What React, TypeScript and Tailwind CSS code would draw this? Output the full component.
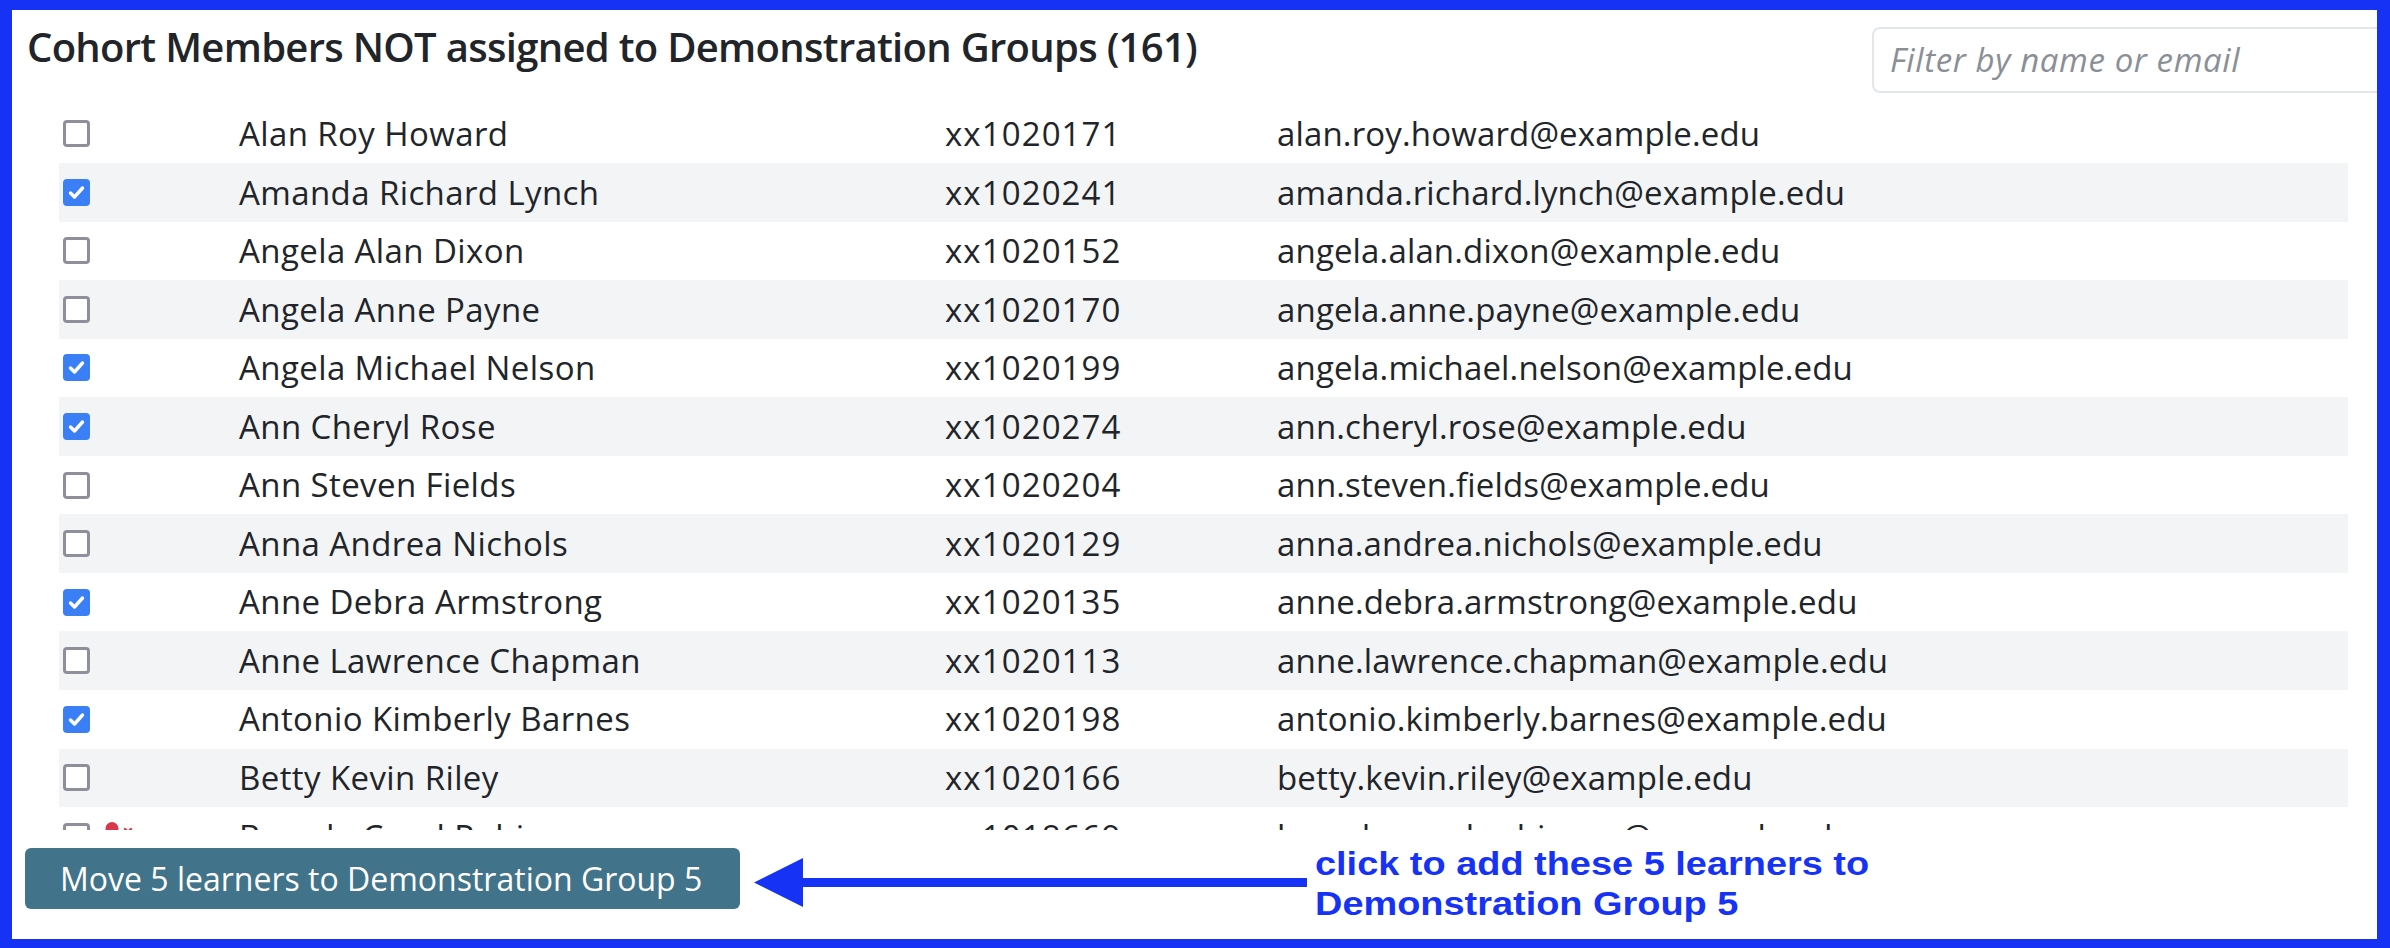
import React from "react";

type Row = { name: string; id: string; email: string; checked: boolean; flag?: boolean };

const rows: Row[] = [
  { name: "Alan Roy Howard", id: "xx1020171", email: "alan.roy.howard@example.edu", checked: false },
  { name: "Amanda Richard Lynch", id: "xx1020241", email: "amanda.richard.lynch@example.edu", checked: true },
  { name: "Angela Alan Dixon", id: "xx1020152", email: "angela.alan.dixon@example.edu", checked: false },
  { name: "Angela Anne Payne", id: "xx1020170", email: "angela.anne.payne@example.edu", checked: false },
  { name: "Angela Michael Nelson", id: "xx1020199", email: "angela.michael.nelson@example.edu", checked: true },
  { name: "Ann Cheryl Rose", id: "xx1020274", email: "ann.cheryl.rose@example.edu", checked: true },
  { name: "Ann Steven Fields", id: "xx1020204", email: "ann.steven.fields@example.edu", checked: false },
  { name: "Anna Andrea Nichols", id: "xx1020129", email: "anna.andrea.nichols@example.edu", checked: false },
  { name: "Anne Debra Armstrong", id: "xx1020135", email: "anne.debra.armstrong@example.edu", checked: true },
  { name: "Anne Lawrence Chapman", id: "xx1020113", email: "anne.lawrence.chapman@example.edu", checked: false },
  { name: "Antonio Kimberly Barnes", id: "xx1020198", email: "antonio.kimberly.barnes@example.edu", checked: true },
  { name: "Betty Kevin Riley", id: "xx1020166", email: "betty.kevin.riley@example.edu", checked: false },
  { name: "Brenda Carol Robinson", id: "xx1018669", email: "brenda.carol.robinson@example.edu", checked: false, flag: true },
];

function Checkbox({ checked }: { checked: boolean }) {
  if (checked) {
    return (
      <div className="w-[27px] h-[27px] rounded-[4px] bg-[#3b7ff6] flex items-center justify-center shrink-0">
        <svg width="19" height="19" viewBox="0 0 19 19">
          <path d="M3.5 10 L7.5 14 L15.5 5" fill="none" stroke="#ffffff" strokeWidth="3.4" strokeLinecap="round" strokeLinejoin="round" />
        </svg>
      </div>
    );
  }
  return <div className="w-[27px] h-[27px] rounded-[4px] border-[3px] border-[#8f8f9c] bg-white shrink-0" />;
}

function UserX() {
  return (
    <svg width="32" height="30" viewBox="0 0 32 30" className="ml-[14px]">
      <circle cx="8" cy="7.5" r="6.5" fill="#d7364b" />
      <path d="M0 28 C0 20 3 17 8 17 C13 17 16 20 16 28 Z" fill="#d7364b" />
      <path d="M21 8 L27 14 M27 8 L21 14" stroke="#d7364b" strokeWidth="2.4" strokeLinecap="round" />
    </svg>
  );
}

export default function App() {
  return (
    <div
      className="w-[2390px] h-[948px] border-l-[12px] border-t-[10px] border-r-[13px] border-b-[9px] border-[#1633f5] bg-white overflow-hidden text-[#212529]"
      style={{ fontFamily: '"Open Sans", "Noto Sans", sans-serif' }}
    >
      <div className="w-full h-full overflow-hidden flex flex-col">
        <div className="h-[94.5px] flex items-start justify-between shrink-0">
          <h1 className="ml-[15px] mt-[13px] text-[40px] leading-[48px] font-[550] tracking-[-0.7px] whitespace-nowrap">
            Cohort Members NOT assigned to Demonstration Groups (161)
          </h1>
          <div className="mt-[17px] -mr-[60px] w-[565px] h-[66px] shrink-0 border-2 border-[#e3e6ea] rounded-[8px] flex items-center pl-[16px]">
            <span className="text-[33px] italic tracking-[0.6px] text-[#8a8f96] whitespace-nowrap">Filter by name or email</span>
          </div>
        </div>

        <div className="ml-[47px] w-[2289px] h-[725.5px] overflow-hidden shrink-0">
          {rows.map((r, i) => (
            <div
              key={r.id}
              className={`h-[58.55px] grid grid-cols-[180px_706px_332px_1fr] items-center text-[33px] tracking-[0.4px] whitespace-nowrap ${
                i % 2 === 1 ? "bg-[#f3f4f6]" : "bg-white"
              }`}
            >
              <div className="pl-[4px] flex items-center">
                <Checkbox checked={r.checked} />
                {r.flag ? <UserX /> : null}
              </div>
              <div>{r.name}</div>
              <div className="tracking-[1.1px]">{r.id}</div>
              <div className="tracking-[0.15px]">{r.email}</div>
            </div>
          ))}
        </div>

        <div className="mt-[18px] flex items-start shrink-0">
          <button className="ml-[13px] w-[715px] h-[61px] rounded-[6px] bg-[#41738a] text-white text-[32px] text-left pl-[35px] whitespace-nowrap">
            Move 5 learners to Demonstration Group 5
          </button>
          <svg width="553" height="61" viewBox="0 0 553 61" className="ml-[14px] shrink-0">
            <polygon points="0,34.5 49,10 49,59" fill="#1633f5" />
            <rect x="48" y="30" width="505" height="9" fill="#1633f5" />
          </svg>
          <div
            className="ml-[8px] -mt-[5px] text-[34px] leading-[40px] font-bold text-[#1633f5] whitespace-nowrap origin-left scale-x-[1.115]"
            style={{ fontFamily: '"Liberation Sans", Arial, sans-serif' }}
          >
            <div>click to add these 5 learners to</div>
            <div>Demonstration Group 5</div>
          </div>
        </div>
      </div>
    </div>
  );
}
